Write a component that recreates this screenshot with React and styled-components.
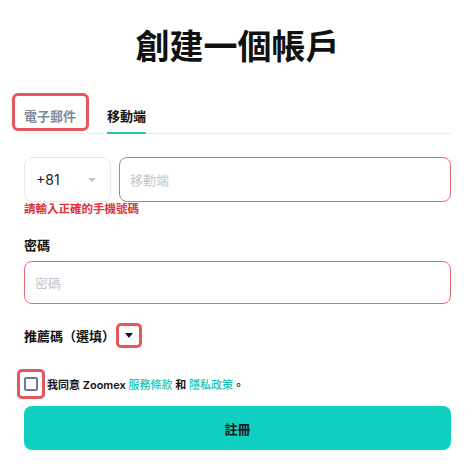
import styled, { createGlobalStyle } from "styled-components";

const GlobalStyle = createGlobalStyle`
  * { box-sizing: border-box; }
  body {
    margin: 0;
    background: #ffffff;
    font-family: "Inter", "Noto Sans CJK TC", sans-serif;
    color: #121212;
  }
`;

const Page = styled.div`
  padding: 27px 23px 0 24px;
  display: flex;
  flex-direction: column;
`;

const Title = styled.h1`
  margin: 0;
  font-size: 34px;
  line-height: 40px;
  font-weight: 700;
  text-align: center;
  color: #111;
`;

const TabBar = styled.div`
  margin-top: 32px;
  display: flex;
  gap: 31px;
  border-bottom: 1px solid #e9ebee;
`;

const Tab = styled.div`
  position: relative;
  height: 34px;
  line-height: 34px;
  font-size: 13px;
  font-weight: ${(p) => (p.$active ? 700 : 600)};
  color: ${(p) => (p.$active ? "#121212" : "#7d8a97")};

  ${(p) =>
    p.$active &&
    `
    &::before {
      content: "";
      position: absolute;
      left: 0;
      right: 0;
      bottom: -1px;
      height: 2px;
      background: #2ac5b2;
    }
  `}

  ${(p) =>
    p.$marked &&
    `
    &::after {
      content: "";
      position: absolute;
      top: -6px;
      bottom: 2px;
      left: -12px;
      right: -13px;
      border: 3px solid #e5575d;
      border-radius: 6px;
    }
  `}
`;

const PhoneRow = styled.div`
  margin-top: 23px;
  display: flex;
  gap: 8px;
`;

const CountrySelect = styled.div`
  flex: none;
  width: 87px;
  height: 45px;
  border: 1px solid #e8eaed;
  border-radius: 8px;
  display: flex;
  align-items: center;
  justify-content: space-between;
  padding: 0 14px 0 11px;
  font-size: 14px;
  color: #1c1c1c;
`;

const SmallCaret = styled.span`
  width: 0;
  height: 0;
  border-left: 4px solid transparent;
  border-right: 4px solid transparent;
  border-top: 4px solid #c2c6cb;
`;

const Input = styled.input`
  flex: ${(p) => (p.$grow ? "1 1 0" : "none")};
  min-width: 0;
  width: 100%;
  height: ${(p) => p.$h || 45}px;
  border: 1.5px solid #e46b75;
  border-radius: 8px;
  padding: 0 10px;
  font-family: inherit;
  font-size: 13px;
  color: #1c1c1c;
  outline: none;

  &::placeholder {
    color: #c3c6cb;
  }
`;

const ErrorText = styled.div`
  font-size: 11.5px;
  line-height: 14px;
  font-weight: 600;
  color: #e2303e;
`;

const Label = styled.div`
  margin-top: 19px;
  margin-bottom: 6px;
  font-size: 13px;
  line-height: 20px;
  font-weight: 700;
  color: #121212;
`;

const ReferralRow = styled.div`
  margin-top: 18px;
  height: 26px;
  display: flex;
  align-items: center;
  gap: 1px;
  font-size: 13px;
  font-weight: 700;
`;

const CaretButton = styled.span`
  width: 26px;
  height: 25px;
  border: 3px solid #e5575d;
  border-radius: 5px;
  display: flex;
  align-items: center;
  justify-content: center;
`;

const DarkCaret = styled.span`
  width: 0;
  height: 0;
  border-left: 4px solid transparent;
  border-right: 4px solid transparent;
  border-top: 5px solid #111;
`;

const AgreeRow = styled.label`
  margin-top: 21px;
  height: 30px;
  display: flex;
  align-items: center;
  gap: 2px;
  font-size: 11px;
  font-weight: 600;
  color: #141414;
`;

const CheckFrame = styled.span`
  margin-left: -7px;
  width: 28px;
  height: 30px;
  border: 3px solid #e5575d;
  border-radius: 5px;
  display: flex;
  align-items: center;
  justify-content: center;
`;

const CheckBox = styled.span`
  width: 14px;
  height: 14px;
  border: 2px solid #6f7b88;
  border-radius: 2px;
`;

const Link = styled.a`
  color: #1cc3b1;
  font-weight: 500;
  text-decoration: none;
`;

const SubmitButton = styled.button`
  margin-top: 7px;
  height: 44px;
  width: 100%;
  border: none;
  border-radius: 8px;
  background: #0fd0c1;
  font-family: inherit;
  font-size: 13px;
  font-weight: 700;
  color: #161616;
`;

export default function App() {
  return (
    <>
      <GlobalStyle />
      <Page>
        <Title>創建一個帳戶</Title>
        <TabBar>
          <Tab $marked>電子郵件</Tab>
          <Tab $active>移動端</Tab>
        </TabBar>
        <PhoneRow>
          <CountrySelect>
            +81
            <SmallCaret />
          </CountrySelect>
          <Input $grow placeholder="移動端" />
        </PhoneRow>
        <ErrorText>請輸入正確的手機號碼</ErrorText>
        <Label>密碼</Label>
        <Input type="password" placeholder="密碼" $h={43} />
        <ReferralRow>
          推薦碼（選填）
          <CaretButton>
            <DarkCaret />
          </CaretButton>
        </ReferralRow>
        <AgreeRow>
          <CheckFrame>
            <CheckBox />
          </CheckFrame>
          <span>
            我同意 Zoomex <Link>服務條款</Link> 和 <Link>隱私政策</Link>。
          </span>
        </AgreeRow>
        <SubmitButton>註冊</SubmitButton>
      </Page>
    </>
  );
}
